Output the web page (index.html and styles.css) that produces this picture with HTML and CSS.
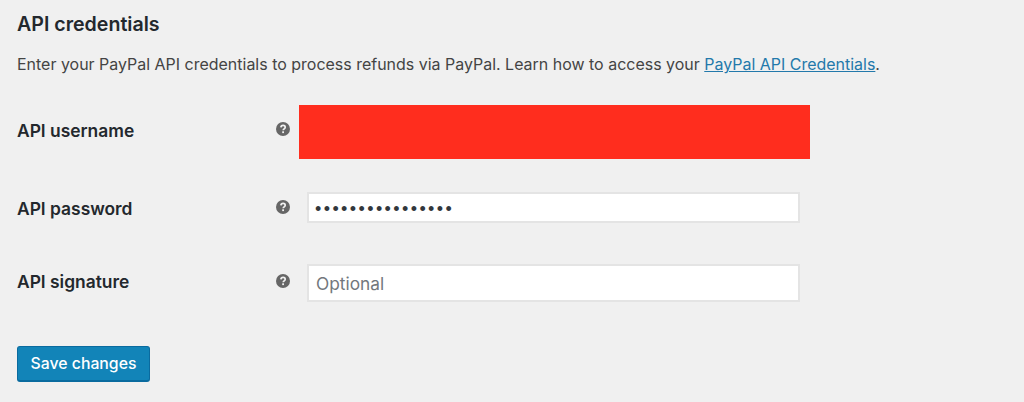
FILE: index.html
```html
<!DOCTYPE html>
<html>
<head>
  <title>API credentials</title>
  <link rel="stylesheet" href="styles.css">
</head>
<body>
  <h2 class="title">API credentials</h2>
  <p class="intro">Enter your PayPal API credentials to process refunds via PayPal. Learn how to access your <a href="#">PayPal API Credentials</a>.</p>

  <div class="row row-user">
    <label class="name">API username</label>
    <svg class="help" viewBox="0 0 14 14"><circle cx="7" cy="7" r="7" fill="#666"/><path d="M4.9 5.4c.1-1.3 1-2 2.2-2s2.1.7 2.1 1.8c0 1.7-2 1.6-2 3.1" fill="none" stroke="#f1f1f1" stroke-width="1.7"/><rect x="6.2" y="9.3" width="1.8" height="1.8" fill="#f1f1f1"/></svg>
    <div class="redacted"></div>
  </div>

  <div class="row row-pass">
    <label class="name">API password</label>
    <svg class="help" viewBox="0 0 14 14"><circle cx="7" cy="7" r="7" fill="#666"/><path d="M4.9 5.4c.1-1.3 1-2 2.2-2s2.1.7 2.1 1.8c0 1.7-2 1.6-2 3.1" fill="none" stroke="#f1f1f1" stroke-width="1.7"/><rect x="6.2" y="9.3" width="1.8" height="1.8" fill="#f1f1f1"/></svg>
    <input class="field dots" type="text" value="••••••••••••••••">
  </div>

  <div class="row row-sig">
    <label class="name">API signature</label>
    <svg class="help" viewBox="0 0 14 14"><circle cx="7" cy="7" r="7" fill="#666"/><path d="M4.9 5.4c.1-1.3 1-2 2.2-2s2.1.7 2.1 1.8c0 1.7-2 1.6-2 3.1" fill="none" stroke="#f1f1f1" stroke-width="1.7"/><rect x="6.2" y="9.3" width="1.8" height="1.8" fill="#f1f1f1"/></svg>
    <input class="field tall" type="text" placeholder="Optional">
  </div>

  <button class="save">Save changes</button>
</body>
</html>
```

FILE: styles.css
```css
html, body {
  height: 100%;
}

body {
  margin: 0;
  padding: 14px 0 0 17px;
  box-sizing: border-box;
  overflow: hidden;
  background-color: #f0f0f0;
  color: #23282d;
  font-family: Inter, "Liberation Sans", sans-serif;
}

.title {
  margin: 0;
  font-size: 19.6px;
  line-height: 20px;
  font-weight: 600;
}

.intro {
  margin: 21px 0 0;
  font-size: 15.98px;
  line-height: 20px;
  color: #444;
}

.intro a {
  color: #2379ab;
}

.row {
  display: flex;
  align-items: center;
  width: 793px;
}

.row-user {
  margin-top: 30px;
  height: 54px;
}

.row-pass {
  margin-top: 33px;
  height: 31px;
}

.row-sig {
  margin-top: 41px;
  height: 38px;
}

.name {
  width: 259px;
  font-size: 17.4px;
  font-weight: 600;
}

.row-user .name {
  margin-bottom: 4px;
}

.row-pass .name {
  margin-top: 2px;
}

.row-sig .name {
  margin-bottom: 3px;
}

.help {
  width: 14px;
  height: 14px;
  flex: none;
}

.row-user .help {
  margin-bottom: 6px;
}

.row-pass .help {
  margin-bottom: 1px;
}

.row-sig .help {
  margin-bottom: 5px;
}

.redacted {
  width: 511px;
  height: 54px;
  margin-left: 9px;
  background-color: #ff2d1e;
}

.field {
  width: 493px;
  height: 100%;
  margin-left: 17px;
  padding: 0 7px;
  box-sizing: border-box;
  border: 2px solid #e4e4e4;
  background-color: #fff;
  color: #32373c;
  font-family: inherit;
  font-size: 17.3px;
  outline: none;
}

.field::placeholder {
  color: #72777c;
}

.dots {
  font-family: "Liberation Sans", sans-serif;
  font-size: 18px;
  letter-spacing: 2.4px;
  padding: 4px 5px 0 6px;
}

.save {
  display: block;
  width: 133px;
  height: 36px;
  margin-top: 44px;
  padding: 0;
  border: 1px solid #0a6b9f;
  border-bottom-width: 2px;
  border-radius: 3px;
  background-color: #1284b8;
  color: #fff;
  font-family: inherit;
  font-size: 15.8px;
  font-weight: 500;
}
```
